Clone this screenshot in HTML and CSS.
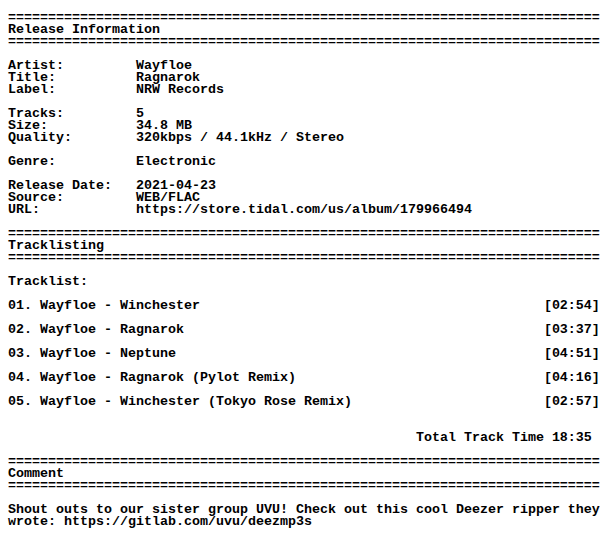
FILE: index.html
```html
<!DOCTYPE html>
<html lang="en">
<head>
<meta charset="utf-8">
<title>Wayfloe - Ragnarok NFO</title>
<link rel="stylesheet" href="styles.css">
</head>
<body>
<pre class="nfo">
==========================================================================
Release Information
==========================================================================

Artist:         Wayfloe
Title:          Ragnarok
Label:          NRW Records

Tracks:         5
Size:           34.8 MB
Quality:        320kbps / 44.1kHz / Stereo

Genre:          Electronic

Release Date:   2021-04-23
Source:         WEB/FLAC
URL:            https://store.tidal.com/us/album/179966494

==========================================================================
Tracklisting
==========================================================================

Tracklist:

01. Wayfloe - Winchester                                           [02:54]

02. Wayfloe - Ragnarok                                             [03:37]

03. Wayfloe - Neptune                                              [04:51]

04. Wayfloe - Ragnarok (Pylot Remix)                               [04:16]

05. Wayfloe - Winchester (Tokyo Rose Remix)                        [02:57]


                                                   Total Track Time 18:35

==========================================================================
Comment
==========================================================================

Shout outs to our sister group UVU! Check out this cool Deezer ripper they
wrote: https://gitlab.com/uvu/deezmp3s
</pre>
</body>
</html>
```
FILE: styles.css
```css
html, body {
  margin: 0;
  padding: 0;
  background: #ffffff;
}

.nfo {
  margin: 0;
  padding: 12px 8px 0;
  color: #000000;
  font-family: "Liberation Mono", "DejaVu Sans Mono", monospace;
  font-weight: bold;
  font-size: 13.33px;
  line-height: 12px;
  white-space: pre;
}
```
